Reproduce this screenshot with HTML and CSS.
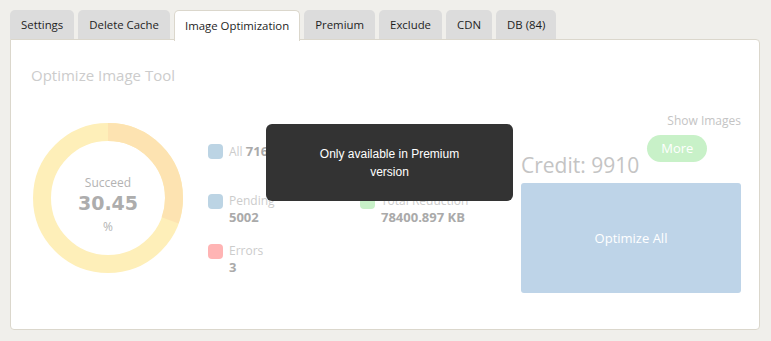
FILE: index.html
```html
<!DOCTYPE html>
<html lang="en">
<head>
  <meta charset="UTF-8">
  <meta name="viewport" content="width=device-width, initial-scale=1.0">
  <title>Image Optimization</title>
  <link rel="stylesheet" href="styles.css">
</head>
<body>
  <div class="wrap">
    <div class="tabs">
      <div class="tab">Settings</div>
      <div class="tab">Delete Cache</div>
      <div class="tab active">Image Optimization</div>
      <div class="tab">Premium</div>
      <div class="tab">Exclude</div>
      <div class="tab">CDN</div>
      <div class="tab">DB (84)</div>
    </div>
    <div class="panel">
      <h2 class="tool-title">Optimize Image Tool</h2>
      <div class="tool-body">
        <div class="chart">
          <svg width="150" height="150" viewBox="0 0 150 150">
            <circle cx="75" cy="75" r="66" fill="none" stroke="#feefb9" stroke-width="18"/>
            <!-- 30.45% of 2*pi*66 = 126.3 -->
            <circle cx="75" cy="75" r="66" fill="none" stroke="#fde3b1" stroke-width="18"
                    stroke-dasharray="126.3 414.7" transform="rotate(-90 75 75)"/>
          </svg>
          <div class="chart-label">
            <span class="chart-caption">Succeed</span>
            <span class="chart-value">30.45</span>
            <span class="chart-unit">%</span>
          </div>
        </div>
        <div class="stats">
          <div class="stat">
            <span class="dot blue"></span>
            <div class="stat-text"><span class="stat-name">All</span> <span class="stat-num">7164</span></div>
          </div>
          <div class="stat">
            <!-- covered by the tooltip -->
          </div>
          <div class="stat">
            <span class="dot blue"></span>
            <div class="stat-text"><span class="stat-name">Pending</span><span class="stat-num block">5002</span></div>
          </div>
          <div class="stat">
            <span class="dot green"></span>
            <div class="stat-text"><span class="stat-name">Total Reduction</span><span class="stat-num block">78400.897 KB</span></div>
          </div>
          <div class="stat">
            <span class="dot red"></span>
            <div class="stat-text"><span class="stat-name">Errors</span><span class="stat-num block">3</span></div>
          </div>
        </div>
        <div class="actions">
          <div class="show-images">Show Images</div>
          <div class="credit-row">
            <span class="credit">Credit: 9910</span>
            <span class="more">More</span>
          </div>
          <div class="optimize-all">Optimize All</div>
        </div>
        <div class="tooltip">Only available in Premium<br>version</div>
      </div>
    </div>
  </div>
</body>
</html>
```
FILE: styles.css
```css
body {
  margin: 0;
  background-color: #f0efeb;
  font-family: "Open Sans", "Segoe UI", sans-serif;
}
.wrap {
  padding: 10px 11px 0 10px;
}
.tabs {
  display: flex;
  gap: 4px;
  height: 29px;
  position: relative;
  z-index: 1;
}
.tab {
  background-color: #dcdcdc;
  border-radius: 5px 5px 0 0;
  padding: 0 11px;
  font-size: 11.4px;
  line-height: 29px;
  color: #1e1e1e;
}
.tab.active {
  background-color: #fff;
  border: 1px solid #dbd7cc;
  border-bottom: none;
  box-sizing: border-box;
  height: 31px;
  padding: 0 10px;
}
.panel {
  background-color: #fff;
  border: 1px solid #dbd7cc;
  border-radius: 0 4px 4px 4px;
  height: 291px;
  box-sizing: border-box;
  padding: 24px 18px 0 20px;
}
.tool-title {
  margin: 0;
  font-size: 15px;
  font-weight: normal;
  line-height: 22px;
  color: #cccccc;
}
.tool-body {
  display: flex;
  position: relative;
  margin-top: 14px;
}
.chart {
  position: relative;
  width: 150px;
  height: 150px;
  margin: 23px 0 0 2px;
}
.chart svg {
  display: block;
}
.chart-label {
  position: absolute;
  top: 52px;
  left: 0;
  right: 0;
  display: flex;
  flex-direction: column;
  align-items: center;
}
.chart-caption {
  font-size: 12px;
  line-height: 16px;
  color: #b3b3b3;
}
.chart-value {
  font-family: "DejaVu Sans", sans-serif;
  font-size: 19px;
  font-weight: bold;
  line-height: 24px;
  color: #adadad;
}
.chart-unit {
  font-size: 12px;
  line-height: 24px;
  color: #b3b3b3;
}
.stats {
  display: grid;
  grid-template-columns: 152px 152px;
  grid-auto-rows: 50px;
  margin: 44px 0 0 25px;
}
.stat {
  display: flex;
  gap: 6px;
}
.stat-text {
  font-size: 12px;
  line-height: 14px;
}
.dot {
  width: 15px;
  height: 15px;
  border-radius: 4px;
  flex-shrink: 0;
}
.dot.blue {
  background-color: #bcd4e4;
}
.dot.green {
  background-color: #c8f1c8;
}
.dot.red {
  background-color: #ffb4b4;
}
.stat-name {
  font-size: 12px;
  color: #cccccc;
}
.stat-num {
  font-size: 13px;
  font-weight: bold;
  color: #aaaaaa;
}
.stat-num.block {
  display: block;
  line-height: 18px;
}
.actions {
  margin-left: auto;
  width: 220px;
  margin-top: 13px;
}
.show-images {
  text-align: right;
  font-size: 12px;
  line-height: 16px;
  color: #c4c4c4;
}
.credit-row {
  display: flex;
  align-items: flex-start;
  margin-top: 6px;
}
.credit {
  font-size: 21px;
  line-height: 28px;
  margin-top: 16px;
  color: #c4c4c4;
}
.more {
  margin-left: 8px;
  background-color: #c8f1c8;
  color: #fff;
  font-size: 13px;
  line-height: 27px;
  padding: 0 14px;
  border-radius: 14px;
}
.optimize-all {
  margin-top: 4px;
  height: 110px;
  background-color: #bed4e8;
  border-radius: 3px;
  color: #fff;
  font-size: 13px;
  display: flex;
  align-items: center;
  justify-content: center;
}
.tooltip {
  position: absolute;
  left: 235px;
  top: 24px;
  width: 247px;
  height: 77px;
  box-sizing: border-box;
  padding-top: 21px;
  background-color: #333333;
  border-radius: 6px;
  color: #fff;
  font-family: "Liberation Sans", Arial, sans-serif;
  font-size: 12px;
  line-height: 18px;
  text-align: center;
}
```
